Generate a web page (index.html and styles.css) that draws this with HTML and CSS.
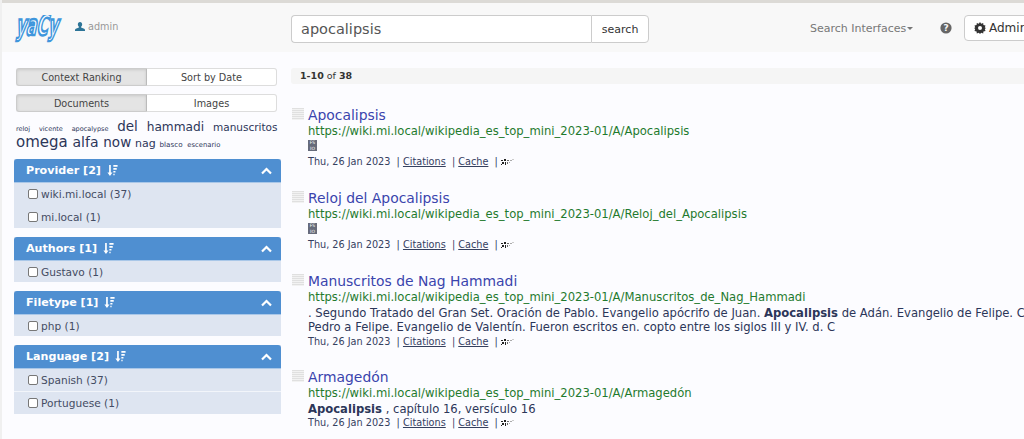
FILE: index.html
```html
<!DOCTYPE html>
<html lang="es">
<head>
<meta charset="utf-8">
<title>YaCy</title>
<link rel="stylesheet" href="styles.css">
</head>
<body>
<svg class="defs" width="0" height="0">
  <symbol id="sort" viewBox="0 0 12 13"><path d="M2 0h2v9h2l-3 4-3-4h2zM7 0h5v2H7zM7 3.500h4v2H7zM7 7h2.500v2H7zM7 10.300h1.500v1.700H7z"/></symbol>
  <symbol id="chev" viewBox="0 0 11 8"><path d="M1 6.500L5.500 2l4.500 4.500"/></symbol>
  <symbol id="mini" viewBox="0 0 13 6"><path fill="#222" d="M0 1h2v1H0zM3 0h2v2H3zM1 3h2v2H1zM4 3h1v3H4zM0 5h1v1H0z"/><path fill="#666" d="M6 1h2v1H6zM6 3h1v2H6z"/><path fill="#aaa" d="M9 1h2v1H9zM8 3h1v1H8z"/><path fill="#ccc" d="M11 0h2v1h-2z"/></symbol>
</svg>
<header class="nav">
  <svg class="logo" width="50" height="30" viewBox="0 0 50 30"><text x="0" y="0" class="logo-text" textLength="42" lengthAdjust="spacingAndGlyphs" transform="translate(1.500 20) skewX(-12) scale(1 1.900)">yaCy</text></svg>
  <div class="user"><svg class="user-icon" width="10" height="11" viewBox="0 0 12 12"><path d="M6 0.5c-1.700 0-2.600 1.300-2.600 2.900 0 1.200.5 2.300 1.300 2.900v1L1 8.800c-.6.3-1 .7-1 1.300V11.500h12V10.100c0-.6-.4-1-1-1.300L7.300 7.300v-1c.8-.6 1.300-1.700 1.300-2.900C8.600 1.800 7.700.5 6 .5z"/></svg><span>admin</span></div>
  <form class="search">
    <input class="search-input" type="text" value="apocalipsis">
    <button class="search-btn" type="button">search</button>
  </form>
  <div class="nav-right">
    <span class="interfaces">Search Interfaces<i class="caret"></i></span>
    <svg class="help" width="12" height="12" viewBox="0 0 12 12"><circle cx="6" cy="6" r="5.600"/><text x="6" y="9.200" class="help-q">?</text></svg>
    <button class="admin" type="button"><svg width="12" height="12" viewBox="0 0 12 12"><path d="M6 0l1.200 1.700 2-.7.2 2.100 2.100.3-.7 2L12 6l-1.200 1.100.7 1.900-2.100.4-.2 2.100-2-.7L6 12l-1.200-1.200-2 .7-.2-2.100L.5 9l.7-1.900L0 6l1.200-.6-.7-2 2.100-.3.2-2.100 2 .7z"/><circle cx="6" cy="6" r="2" fill="#fff"/></svg>Administration</button>
  </div>
</header>
<div class="page">
  <aside class="side">
    <div class="toggle"><span class="seg on">Context Ranking</span><span class="seg">Sort by Date</span></div>
    <div class="toggle"><span class="seg on">Documents</span><span class="seg">Images</span></div>
    <div class="cloud">
      <div class="cloud-line"><span class="t9 sp">reloj</span><span class="t9 sp">vicente</span><span class="t9 sp">apocalypse</span><span class="t14 sp">del</span><span class="t12w sp">hammadi</span><span class="t11">manuscritos</span></div>
      <div class="cloud-line wide"><span class="t16">omega</span> <span class="t15">alfa</span> <span class="t14">now</span> <span class="t12">nag</span> <span class="t9b">blasco</span> <span class="t9c">escenario</span></div>
    </div>
    <section class="panel">
      <h3 class="panel-head">Provider [2] <svg class="sort" width="11" height="11"><use href="#sort"/></svg><svg class="chev" width="11" height="8"><use href="#chev"/></svg></h3>
      <label class="row tall"><input type="checkbox">wiki.mi.local (37)</label>
      <label class="row tall"><input type="checkbox">mi.local (1)</label>
    </section>
    <section class="panel">
      <h3 class="panel-head">Authors [1] <svg class="sort" width="11" height="11"><use href="#sort"/></svg><svg class="chev" width="11" height="8"><use href="#chev"/></svg></h3>
      <label class="row"><input type="checkbox">Gustavo (1)</label>
    </section>
    <section class="panel">
      <h3 class="panel-head">Filetype [1] <svg class="sort" width="11" height="11"><use href="#sort"/></svg><svg class="chev" width="11" height="8"><use href="#chev"/></svg></h3>
      <label class="row"><input type="checkbox">php (1)</label>
    </section>
    <section class="panel">
      <h3 class="panel-head">Language [2] <svg class="sort" width="11" height="11"><use href="#sort"/></svg><svg class="chev" width="11" height="8"><use href="#chev"/></svg></h3>
      <label class="row tall line"><input type="checkbox">Spanish (37)</label>
      <label class="row tall"><input type="checkbox">Portuguese (1)</label>
    </section>
  </aside>
  <main class="results">
    <div class="count"><b>1-10</b> of <b>38</b></div>
    <article class="hit first">
      <h4 class="title"><i class="doc"></i><a href="#">Apocalipsis</a></h4>
      <div class="url">https://wiki.mi.local/wikipedia_es_top_mini_2023-01/A/Apocalipsis</div>
      <div class="body"><div class="thumb"><span>FS</span><span>IO</span></div></div>
      <div class="meta">Thu, 26 Jan 2023 &nbsp;| <a href="#">Citations</a> &nbsp;| <a href="#">Cache</a> &nbsp;| <svg class="mini" width="13" height="6"><use href="#mini"/></svg></div>
    </article>
    <article class="hit">
      <h4 class="title"><i class="doc"></i><a href="#">Reloj del Apocalipsis</a></h4>
      <div class="url">https://wiki.mi.local/wikipedia_es_top_mini_2023-01/A/Reloj_del_Apocalipsis</div>
      <div class="body"><div class="thumb"><span>FS</span><span>IO</span></div></div>
      <div class="meta">Thu, 26 Jan 2023 &nbsp;| <a href="#">Citations</a> &nbsp;| <a href="#">Cache</a> &nbsp;| <svg class="mini" width="13" height="6"><use href="#mini"/></svg></div>
    </article>
    <article class="hit">
      <h4 class="title"><i class="doc"></i><a href="#">Manuscritos de Nag Hammadi</a></h4>
      <div class="url">https://wiki.mi.local/wikipedia_es_top_mini_2023-01/A/Manuscritos_de_Nag_Hammadi</div>
      <p class="body snippet">. Segundo Tratado del Gran Set. Oración de Pablo. Evangelio apócrifo de Juan. <b>Apocalipsis</b> de Adán. Evangelio de Felipe. C<br>Pedro a Felipe. Evangelio de Valentín. Fueron escritos en. copto entre los siglos III y IV. d. C</p>
      <div class="meta">Thu, 26 Jan 2023 &nbsp;| <a href="#">Citations</a> &nbsp;| <a href="#">Cache</a> &nbsp;| <svg class="mini" width="13" height="6"><use href="#mini"/></svg></div>
    </article>
    <article class="hit after-long">
      <h4 class="title"><i class="doc"></i><a href="#">Armagedón</a></h4>
      <div class="url">https://wiki.mi.local/wikipedia_es_top_mini_2023-01/A/Armagedón</div>
      <p class="body snippet"><b>Apocalipsis</b> , capítulo 16, versículo 16</p>
      <div class="meta">Thu, 26 Jan 2023 &nbsp;| <a href="#">Citations</a> &nbsp;| <a href="#">Cache</a> &nbsp;| <svg class="mini" width="13" height="6"><use href="#mini"/></svg></div>
    </article>
  </main>
</div>
</body>
</html>
```
FILE: styles.css
```css
* { box-sizing: border-box; }
html, body { margin: 0; height: 100%; overflow: hidden; }
body {
  background: #fcfcff;
  color: #2c3659;
  font-family: "DejaVu Sans", sans-serif;
  font-size: 11px;
  width: 1024px;
  height: 439px;
  border-left: 2px solid #f0f0f0;
}
.defs { display: block; }
.nav {
  height: 52px;
  width: 1024px;
  overflow: hidden;
  background: #f8f8f8;
  border-top: 3px solid #dcdad6;
  display: flex;
  align-items: flex-start;
  white-space: nowrap;
  margin-left: -2px;
  padding-left: 14px;
}
.logo { margin-top: 12px; flex: none; }
.logo-text {
  font: bold 15px "DejaVu Sans", sans-serif;
  fill: #fff;
  stroke: #3f96dc;
  stroke-width: 2px;
  vector-effect: non-scaling-stroke;
}
.user { margin: 16px 0 0 11px; width: 216px; display: flex; align-items: center; gap: 3px; color: #999; font-size: 9.700px; height: 14px; flex: none; }
.user-icon { fill: #2d7497; }
.search { display: flex; margin-top: 12px; flex: none; width: 358px; height: 28px; }
.search-input {
  width: 301px; height: 28px; border: 1px solid #ccc; border-right: 0;
  border-radius: 4px 0 0 4px; padding: 0 9px; font: 14.500px "DejaVu Sans", sans-serif; color: #555; background: #fff; outline: 0;
}
.search-btn {
  width: 58px; height: 28px; border: 1px solid #ccc; border-radius: 0 4px 4px 0; background: #fff;
  font: 11px "DejaVu Sans", sans-serif; color: #333; padding: 0;
}
.nav-right { display: flex; margin-left: 161px; margin-top: 12px; height: 26px; align-items: center; flex: none; }
.interfaces { color: #777; font-size: 11px; width: 130px; }
.caret { display: inline-block; border-top: 3px solid #777; border-left: 3px solid transparent; border-right: 3px solid transparent; margin-left: 1px; vertical-align: middle; }
.help { fill: #666; flex: none; }
.help-q { fill: #f8f8f8; font: bold 9px "DejaVu Sans", sans-serif; text-anchor: middle; }
.admin {
  margin-left: 12px; height: 26px; width: 130px; border: 1px solid #ccc; border-radius: 4px; background: #fff;
  font: 12px "DejaVu Sans", sans-serif; color: #333; padding: 0 0 0 9px; display: flex; align-items: center; gap: 3px; flex: none;
}
.admin svg { fill: #333; flex: none; }
.page { display: flex; align-items: flex-start; padding-left: 12px; }
.side { width: 263px; flex: none; padding-top: 16px; }
.toggle { display: flex; height: 18px; margin: 0 0 8px 2px; width: 261px; font-size: 9.700px; color: #444; }
.seg {
  flex: 1; display: flex; align-items: center; justify-content: center; background: #fff;
  border: 1px solid #ddd; border-radius: 0 3px 3px 0; border-left: 0;
}
.seg.on { flex: none; width: 131px; background: #e4e4e4; border: 1px solid #ccc; border-radius: 3px 0 0 3px; box-shadow: inset 0 1px 3px rgba(0,0,0,.12); border-right-color: #bbb; }
.cloud { color: #2c3659; margin: -1px -4px 0 2px; white-space: nowrap; height: 40px; }
.cloud-line { height: 15px; line-height: 15px; }
.cloud-line.wide { word-spacing: 1.300px; height: 17px; line-height: 17px; }
.sp { margin-right: 8.800px; }
.t9 { font-size: 6.500px; }
.t9c { font-size: 6.800px; }
.t9b { font-size: 7.200px; }
.t11 { font-size: 10.500px; }
.t12 { font-size: 11px; margin: 0 -1px; }
.t12w { font-size: 12.200px; }
.t14 { font-size: 13.500px; }
.t15 { font-size: 14px; }
.t16 { font-size: 15px; }
.panel { margin-bottom: 9px; background: #dee5f1; width: 267px; }
.panel-head {
  margin: 0; height: 24px; background: #4f8fd1; color: #fff; font-size: 11.100px; font-weight: bold;
  border-radius: 3px 3px 0 0; padding: 0 9px 0 12px; display: flex; align-items: center; white-space: pre;
  border-bottom: 1px solid #a9c7e8;
}
.sort { fill: #fff; margin-left: 2px; }
.chev { margin-left: auto; fill: none; stroke: #fff; stroke-width: 2.200px; }
.row { display: flex; align-items: center; height: 21px; padding-left: 14px; font-size: 10.600px; color: #444c63; }
.row.tall { height: 22.500px; }
.row.line { border-bottom: 1px solid #f2f5fa; }
.row input { margin: 0 3px 0 0; width: 10px; height: 10px; appearance: none; border: 1px solid #777; border-radius: 2px; background: #fff; flex: none; }
.results { margin-left: 14px; flex: none; width: 733px; padding-top: 16px; overflow: hidden; }
.count { height: 16px; background: #f5f5f5; border-radius: 3px 0 0 3px; padding-left: 9px; font-size: 9.500px; line-height: 15px; color: #333; }
.hit { margin-top: 22.500px; white-space: nowrap; padding-left: 17px; }
.hit.first { margin-top: 23px; }
.hit.after-long { margin-top: 21px; }
.title { margin: 0; font-size: 13.900px; font-weight: normal; line-height: 17px; position: relative; }
.title a { color: #3a44ad; text-decoration: none; }
.doc {
  position: absolute; left: -16px; top: 1px; width: 12px; height: 12px;
  background: repeating-linear-gradient(#e0e0e0 0 1px, #f2f2f2 1px 2px);
}
.url { color: #1f7a2e; font-size: 11.600px; line-height: 15px; }
.body { margin: 0; font-size: 11.600px; line-height: 14px; color: #2c3659; padding-bottom: 1.500px; min-height: 15.500px; }
.snippet { padding-top: 1px; }
.thumb { width: 9px; height: 11px; background: #666b7a; color: #fff; font-size: 4.500px; line-height: 5.500px; display: flex; flex-direction: column; align-items: center; margin-top: 1px; overflow: hidden; }
.meta { font-size: 9.700px; line-height: 12px; color: #35405f; }
.meta a { color: #35405f; text-decoration: underline; }
.mini { vertical-align: 0; }
```
